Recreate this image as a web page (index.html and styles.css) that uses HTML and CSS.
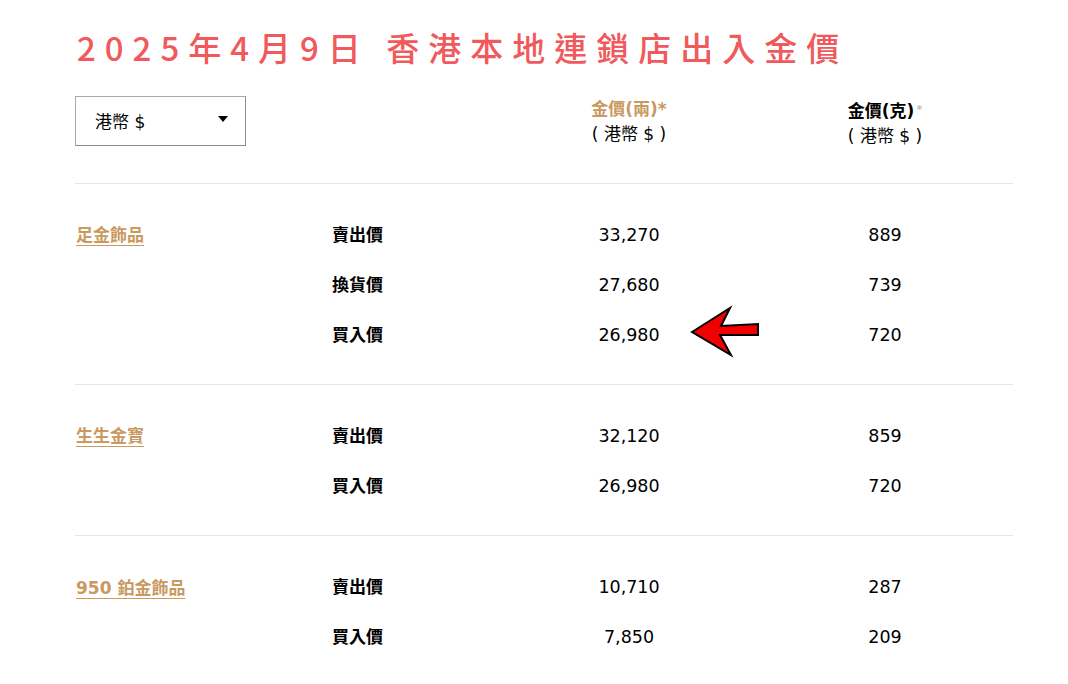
FILE: index.html
```html
<!DOCTYPE html>
<html lang="zh-Hant">
<head>
<meta charset="utf-8">
<title>金價</title>
<link rel="stylesheet" href="styles.css">
</head>
<body>
<div class="page">
  <h1 class="title">2025年4月9日 香港本地連鎖店出入金價</h1>
  <div class="head grid">
    <div class="select-cell">
      <div class="select"><span>港幣 $</span><span class="caret"></span></div>
    </div>
    <div></div>
    <div class="colhead gold"><div class="ch-title">金價(兩)*</div><div class="ch-sub">( 港幣 $ )</div></div>
    <div class="colhead"><div class="ch-title">金價(克)<span class="faint">*</span></div><div class="ch-sub">( 港幣 $ )</div></div>
  </div>

  <div class="section grid">
    <a class="cat" href="#">足金飾品</a><div class="lbl">賣出價</div><div class="num">33,270</div><div class="num">889</div>
    <div></div><div class="lbl">換貨價</div><div class="num">27,680</div><div class="num">739</div>
    <div></div><div class="lbl">買入價</div><div class="num">26,980</div><div class="num">720</div>
  </div>
  <div class="section grid">
    <a class="cat" href="#">生生金寶</a><div class="lbl">賣出價</div><div class="num">32,120</div><div class="num">859</div>
    <div></div><div class="lbl">買入價</div><div class="num">26,980</div><div class="num">720</div>
  </div>
  <div class="section grid">
    <a class="cat bold" href="#">950 鉑金飾品</a><div class="lbl">賣出價</div><div class="num">10,710</div><div class="num">287</div>
    <div></div><div class="lbl">買入價</div><div class="num">7,850</div><div class="num">209</div>
  </div>

  <svg class="arrow" width="80" height="60" viewBox="0 0 80 60">
    <polygon points="4,28 42,4 33,22 70,20 70,31 32,31 43,51" fill="#f00000" stroke="#000" stroke-width="2" stroke-linejoin="miter"/>
  </svg>
</div>
</body>
</html>
```

FILE: styles.css
```css
html, body {
  margin: 0;
  padding: 0;
  background: #fff;
}
body {
  font-family: "DejaVu Sans", "Noto Sans CJK TC", sans-serif;
  font-size: 17.5px;
  color: #000;
}
.page {
  position: relative;
  width: 938px;
  padding: 20px 0 0 75px;
}
.title {
  margin: 0 0 22px 2px;
  font-family: "Noto Sans CJK TC", sans-serif;
  font-weight: 500;
  font-size: 33px;
  line-height: 54px;
  letter-spacing: 9px;
  color: #f05a5c;
  white-space: nowrap;
}
.grid {
  display: grid;
  grid-template-columns: 257px 169px 256px 256px;
}
.head {
  height: 88px;
  border-bottom: 1px solid #e6e6e6;
  box-sizing: border-box;
}
.select {
  box-sizing: border-box;
  width: 171px;
  height: 50px;
  border: 1px solid #8f8f8f;
  border-top-color: #a9a9a9;
  border-left-color: #a9a9a9;
  display: flex;
  align-items: center;
  justify-content: space-between;
  padding: 0 17px 2px 19px;
  font-size: 17px;
}
.caret {
  width: 0;
  height: 0;
  border-left: 5.5px solid transparent;
  border-right: 5.5px solid transparent;
  border-top: 6px solid #000;
  margin-bottom: 2px;
}
.colhead {
  text-align: center;
  line-height: 25px;
  margin-top: 1px;
  font-size: 17px;
}
.ch-title {
  font-weight: bold;
}
.gold .ch-title {
  color: #c9995f;
}
.faint {
  color: #bbb;
  font-size: 11px;
  vertical-align: 4px;
  margin-left: 2px;
}
.section {
  grid-auto-rows: 50px;
  padding: 26px 0 24px;
  border-bottom: 1px solid #e6e6e6;
  align-items: center;
}
.section:last-child {
  border-bottom: none;
}
.cat {
  justify-self: start;
  color: #c9995f;
  text-decoration: underline;
  text-underline-offset: 4px;
  font-size: 17px;
  font-weight: bold;
  font-family: "Noto Sans CJK TC", "DejaVu Sans", sans-serif;
  margin-left: 1px;
  margin-bottom: 4px;
}
.cat.bold {
  font-family: "DejaVu Sans", "Noto Sans CJK TC", sans-serif;
  margin-bottom: 2px;
}
.lbl {
  font-size: 17px;
  font-weight: bold;
  font-family: "Noto Sans CJK TC", sans-serif;
  padding-bottom: 4px;
}
.num {
  text-align: center;
}
.arrow {
  position: absolute;
  left: 688px;
  top: 304px;
}
```
